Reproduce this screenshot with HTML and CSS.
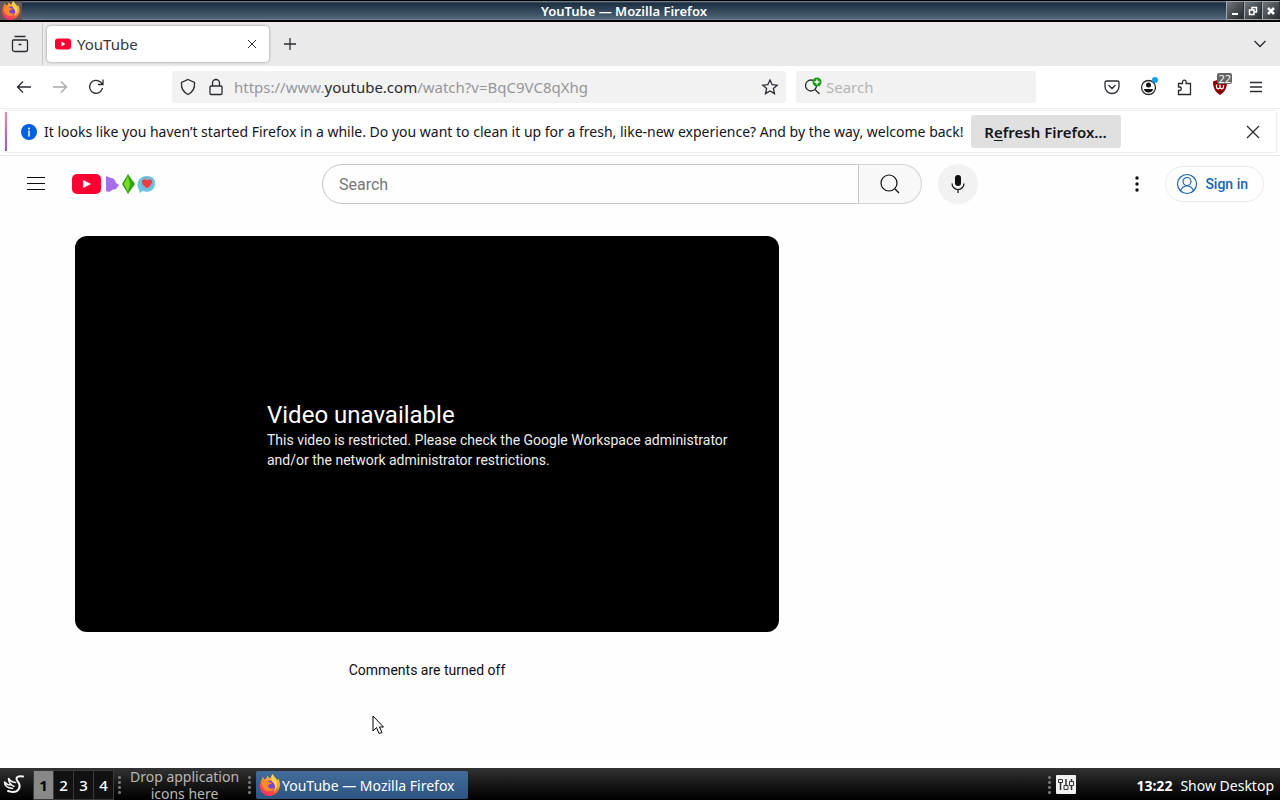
FILE: index.html
```html
<!DOCTYPE html>
<html lang="en">
<head>
<meta charset="utf-8">
<title>YouTube — Mozilla Firefox</title>
<link rel="stylesheet" href="styles.css">
</head>
<body>
<svg class="defs" aria-hidden="true">
  <defs>
    <linearGradient id="flame" x1="0.8" y1="0" x2="0.3" y2="1">
      <stop offset="0" stop-color="#ffe04a"/><stop offset="0.4" stop-color="#ff9a2e"/><stop offset="0.75" stop-color="#ff4b3e"/><stop offset="1" stop-color="#e82d7c"/>
    </linearGradient>
    <symbol id="firefox" viewBox="0 0 24 24">
      <path fill="url(#flame)" d="M3 6 4 3l2 3 2-1 1-3 3 3c1-1 1-3 3-5 1 3 4 4 5 7l1-2c2 4 3 9 0 13-2 4-6 6-10 6C5 24 1 19 1 13c0-3 1-5 2-7z"/>
      <circle cx="12" cy="13" r="6" fill="#7b45d6"/>
      <path fill="#ff8a2a" d="M3 9c3-3 6-1 8 0 2 0 3 0 3 1l-4 2c-1 4 4 5 7 3-2 5-9 5-12 1-1-2-2-4-2-7z"/>
      <path fill="#ffd23f" d="M15 1c1 3 5 5 5 11 0 3-2 6-4 7 3-5 1-8-1-10-2-3-1-6 0-8z"/>
    </symbol>
  </defs>
</svg>

<header class="titlebar">
  <svg class="titlebar-icon" viewBox="0 0 24 24"><use href="#firefox"/></svg>
  <span class="titlebar-text">YouTube — Mozilla Firefox</span>
  <div class="window-buttons">
    <button aria-label="Minimize"><svg viewBox="0 0 16 16"><path d="M5 11h6" stroke-width="2"/></svg></button>
    <button aria-label="Restore"><svg viewBox="0 0 16 16"><path d="M7 7V4.500h4.500V9H9.500M4.500 7h4.500v4.500H4.500z" stroke-width="1.500"/></svg></button>
    <button aria-label="Close window"><svg viewBox="0 0 16 16"><path d="m5 5 6 6m0-6-6 6" stroke-width="2.500"/></svg></button>
  </div>
</header>

<div class="tabstrip">
  <button class="icon-button view-button" aria-label="Firefox View"><svg class="icon" viewBox="0 0 20 20"><path d="M4.500 2.500h11M3.500 6h13a1 1 0 0 1 1 1v8.500a2 2 0 0 1-2 2h-11a2 2 0 0 1-2-2V7a1 1 0 0 1 1-1zM8.500 10.500h3"/></svg></button>
  <div class="tab">
    <svg class="favicon" viewBox="0 0 16 12"><rect width="16" height="11" y="0.500" rx="3" fill="#ff0033"/><path fill="#fff" d="M6.500 3.500v5l4-2.500z"/></svg>
    <span class="tab-label">YouTube</span>
    <button class="icon-button" aria-label="Close tab"><svg class="icon-small" viewBox="0 0 10 10"><path d="m1 1 8 8m0-8-8 8"/></svg></button>
  </div>
  <button class="icon-button new-tab" aria-label="New tab"><svg class="icon" viewBox="0 0 20 20"><path d="M10 4v12M4 10h12"/></svg></button>
  <button class="icon-button all-tabs" aria-label="List all tabs"><svg class="icon" viewBox="0 0 20 20"><path d="m4.500 7 5.500 5.500L15.500 7"/></svg></button>
</div>

<nav class="navbar">
  <div class="nav-buttons">
    <button class="icon-button" aria-label="Back"><svg class="icon" viewBox="0 0 20 20"><path d="M17 10H3.500M9 4.500 3.500 10 9 15.500"/></svg></button>
    <button class="icon-button" aria-label="Forward" disabled><svg class="icon" viewBox="0 0 20 20"><path d="M3 10h13.500M11 4.500l5.500 5.500-5.500 5.500"/></svg></button>
    <button class="icon-button" aria-label="Reload"><svg class="icon" viewBox="0 0 20 20"><path d="M16.500 11a6.500 6.500 0 1 1-2-6l2 2M17 2.500v5h-5"/></svg></button>
  </div>
  <div class="urlbar">
    <button class="icon-button" aria-label="Tracking protection"><svg class="icon" viewBox="0 0 20 20"><path d="m10 2.500 6.500 3c.5 5-1.500 9.500-6.500 12-5-2.500-7-7-6.500-12z"/></svg></button>
    <button class="icon-button" aria-label="Connection secure"><svg class="icon" viewBox="0 0 20 20"><path d="M5 9h10a1 1 0 0 1 1 1v6.500a1 1 0 0 1-1 1H5a1 1 0 0 1-1-1V10a1 1 0 0 1 1-1zM6.500 9V6a3.500 3.500 0 0 1 7 0v3"/></svg></button>
    <div class="url" role="textbox" aria-label="Address" contenteditable="true" spellcheck="false">https://www.<span class="url-domain">youtube.com</span>/watch?v=BqC9VC8qXhg</div>
    <button class="icon-button" aria-label="Bookmark"><svg class="icon" viewBox="0 0 20 20"><path d="m10 3 2.200 4.700 5 .5-3.800 3.400 1.100 5-4.500-2.600-4.500 2.600 1.100-5-3.800-3.400 5-.5z"/></svg></button>
  </div>
  <label class="searchbar">
    <svg class="icon" viewBox="0 0 20 20"><circle cx="9" cy="8.500" r="5.500"/><path d="m13 12.500 4.500 4.500"/><circle cx="15" cy="5" r="4.500" fill="#16a016" stroke="none"/><path d="M15 2.500v5M12.500 5h5" stroke="#fff"/></svg>
    <input type="text" placeholder="Search" aria-label="Search the web">
  </label>
  <div class="toolbar-actions">
    <button class="icon-button" aria-label="Save to Pocket"><svg class="icon" viewBox="0 0 20 20"><path d="M4.500 4h11a1.500 1.500 0 0 1 1.500 1.500V9.500a7 7 0 0 1-14 0v-4A1.500 1.500 0 0 1 4.500 4zM6.500 8l3.500 3.500L13.500 8"/></svg></button>
    <button class="icon-button" aria-label="Account"><svg class="icon" viewBox="0 0 20 20"><circle cx="10.500" cy="10.500" r="7"/><circle cx="10.500" cy="8" r="2.500" fill="#15141a" stroke="none"/><path fill="#15141a" stroke="none" d="M6 12h9c0 2-2 3.500-4.500 3.500S6 14 6 12z"/><circle cx="17" cy="3" r="3" fill="#1a9bf0" stroke="none"/></svg></button>
    <button class="icon-button" aria-label="Extensions"><svg class="icon" viewBox="0 0 20 20"><path d="M4.500 17.500v-4H6a1.800 1.800 0 0 0 0-3.500H4.500V6.500h4V5a1.800 1.800 0 0 1 3.600 0v1.500h4.400v11z"/></svg></button>
    <button class="icon-button shield" aria-label="uBlock Origin"><svg class="icon" viewBox="0 0 20 20"><path fill="#8f0000" stroke="none" d="m10 2 7 2.500c0 6-2 10.500-7 13.500-5-3-7-7.500-7-13.500z"/><path stroke="#fff" d="M6.500 7.500V10a1.700 1.700 0 0 0 3.500 0V7.500M10 10a1.700 1.700 0 0 0 3.500 0V8"/></svg><span class="badge">22</span></button>
    <button class="icon-button" aria-label="Application menu"><svg class="icon" viewBox="0 0 20 20"><path d="M4 5.500h12M4 10h12M4 14.500h12"/></svg></button>
  </div>
</nav>

<div class="notification-area">
  <div class="notification" role="alert">
    <svg class="info-icon" viewBox="0 0 16 16"><circle cx="8" cy="8" r="8" fill="#0060df"/><circle cx="8" cy="4.500" r="1" fill="#fff"/><path d="M8 7v5" stroke="#fff" stroke-width="1.500" stroke-linecap="round"/></svg>
    <span class="notification-text">It looks like you haven’t started Firefox in a while. Do you want to clean it up for a fresh, like-new experience? And by the way, welcome back!</span>
    <button class="refresh-button">R<u>e</u>fresh Firefox…</button>
    <button class="icon-button dismiss" aria-label="Dismiss"><svg class="icon" viewBox="0 0 20 20"><path d="m4 4 12 12m0-12L4 16"/></svg></button>
  </div>
</div>

<main class="page">
  <header class="masthead">
    <div class="masthead-start">
      <button class="icon-button" aria-label="Guide"><svg class="icon-large" viewBox="0 0 24 24"><path d="M3 5.500h18M3 11.500h18M3 17.500h18"/></svg></button>
      <a class="logo" href="#" aria-label="YouTube Home"><svg viewBox="0 0 84 20">
        <rect width="29" height="20" rx="5" fill="#ff0033"/><path fill="#fff" d="M11 6v8l8-4z"/>
        <path fill="#a66cf0" d="M34 2l5 2c3 0 4 2 5 5l3 2-3 4-4 1-3 2-3-1z"/>
        <path fill="#35a318" d="m56 0 7 10-7 10-6-10z"/><path fill="#72dd20" d="m56 2 2 8-2 8-4-8z"/>
        <path fill="#64c7e8" d="M67 19c1-2 0-3-1-5-2-6 2-12 9-12 6 0 9 4 8 9-1 6-7 8-12 6z"/><circle cx="75" cy="9" r="6" fill="#91aabe"/><path fill="#ed3b45" d="M75 14c-3-2-5-4-5-6 0-3 4-3 5-1 1-2 5-2 5 1 0 2-2 4-5 6z"/>
      </svg></a>
    </div>
    <form class="search">
      <input class="search-input" type="text" placeholder="Search" aria-label="Search YouTube">
      <button class="search-submit" type="button" aria-label="Search"><svg class="icon-large" viewBox="0 0 24 24"><circle cx="11" cy="11" r="8"/><path d="m17 17 4 4"/></svg></button>
      <button class="mic" type="button" aria-label="Search with your voice"><svg class="icon-large" viewBox="0 0 24 24"><rect x="9" y="3" width="6" height="11" rx="3" fill="#0f0f0f" stroke="none"/><path d="M6 11.500a6 6 0 0 0 12 0M12 17.500V21"/></svg></button>
    </form>
    <div class="masthead-end">
      <button class="icon-button" aria-label="Settings"><svg class="icon-large" viewBox="0 0 24 24"><g fill="#0f0f0f" stroke="none"><circle cx="12" cy="6" r="1.700"/><circle cx="12" cy="12" r="1.700"/><circle cx="12" cy="18" r="1.700"/></g></svg></button>
      <a class="sign-in" href="#"><svg class="icon-large" viewBox="0 0 24 24"><circle cx="12" cy="12" r="9.500"/><circle cx="12" cy="9.500" r="4"/><path d="M5.500 19c1-3 3.500-5 6.500-5s5.500 2 6.500 5"/></svg>Sign in</a>
    </div>
  </header>
  <div class="columns">
    <div class="primary">
      <section class="player">
        <div class="player-error">
          <h1>Video unavailable</h1>
          <p>This video is restricted. Please check the Google Workspace administrator and/or the network administrator restrictions.</p>
        </div>
      </section>
      <p class="comments">Comments are turned off</p>
    </div>
    <aside class="secondary"></aside>
  </div>
</main>

<footer class="panel">
  <button class="start" aria-label="Applications"><svg viewBox="0 0 22 22"><g fill="none" stroke="#f4f4f4" stroke-linecap="round" stroke-linejoin="round"><path stroke-width="2" d="M20 2.500c-3-.5-6-.5-6.500 2-.3 2 1.500 3 2.500 5 2 4-1 8.500-6 8.500-2 0-3-.5-5-1"/><path stroke-width="1.500" d="M12.500 8.500C9 8 7 7 5.500 4.500 5.500 9 8 11 11 12.500M8 11C5 11 3 10 1.500 8c0 4 3.500 6 8 6.500"/></g></svg></button>
  <div class="workspaces">
    <button class="current">1</button><button>2</button><button>3</button><button>4</button>
  </div>
  <span class="grip"></span>
  <span class="launcher-hint">Drop application icons here</span>
  <span class="grip"></span>
  <button class="task"><svg viewBox="0 0 24 24"><use href="#firefox"/></svg>YouTube — Mozilla Firefox</button>
  <div class="tray">
    <span class="grip"></span>
    <svg class="mixer" viewBox="0 0 20 20"><rect width="20" height="19" rx="1" fill="#f2f2f2"/><path d="M4.500 4v11M10 4v11M15.500 4v11" stroke="#333" stroke-width="1.500"/><path fill="#f2f2f2" stroke="#333" d="M2.500 4.500h4v3h-4zM8 10.500h4v4H8zM13.500 6.500h4v4h-4z"/></svg>
    <time class="clock">13:22</time>
    <button class="show-desktop">Show Desktop</button>
  </div>
</footer>

<svg class="cursor" viewBox="0 0 12 20" aria-hidden="true"><path fill="#fff" stroke="#000" d="M1 1v15l3.500-3.500L7 18.500l3-1-2.500-5.500H11.500z"/></svg>
</body>
</html>
```
FILE: styles.css
```css
* {
  box-sizing: border-box;
}

body {
  margin: 0;
  min-height: 100vh;
  display: flex;
  flex-direction: column;
  overflow: hidden;
  background: #fff;
  color: #15141a;
  font-family: "Noto Sans", sans-serif;
  font-size: 15px;
}

button,
input {
  margin: 0;
  padding: 0;
  border: 0;
  background: none;
  color: inherit;
  font: inherit;
}

input::placeholder {
  color: #b4b4b4;
  opacity: 1;
}

svg {
  display: block;
  flex: none;
}

.defs {
  position: absolute;
  width: 0;
  height: 0;
}

.icon,
.icon-small,
.icon-large {
  fill: none;
  stroke: #2b2a33;
  stroke-width: 1.3;
}

.icon {
  width: 20px;
  height: 20px;
}

.icon-small {
  width: 10px;
  height: 10px;
  stroke-width: 1;
}

.icon-large {
  width: 24px;
  height: 24px;
  stroke: #0f0f0f;
  stroke-width: 1.2;
}

.icon-button {
  display: flex;
  align-items: center;
  justify-content: center;
  flex: none;
}

.icon-button:disabled {
  opacity: 0.4;
}

/* Window frame */
.titlebar {
  display: flex;
  align-items: center;
  justify-content: space-between;
  height: 22px;
  border: solid #000;
  border-width: 1px 0 2px;
  background: linear-gradient(#8494a2 0, #1c2e40 2px, #34495c 10px, #516679 18px, #8b9ba8 19px);
  color: #fff;
}

.titlebar-icon {
  width: 22px;
  height: 19px;
  background: #62585c;
}

.titlebar-text {
  font-size: 13px;
  font-weight: 600;
  line-height: 18px;
}

.window-buttons {
  display: flex;
}

.window-buttons button {
  width: 18px;
  height: 19px;
  border: 1px solid #a2a7ad;
  border-right-color: #30353b;
  background: linear-gradient(135deg, #70767d, #24282e);
}

.window-buttons svg {
  width: 16px;
  height: 16px;
  fill: none;
  stroke: #fff;
}

/* Tabs */
.tabstrip {
  display: flex;
  align-items: center;
  height: 44px;
  background: #eaeaea;
}

.view-button {
  width: 43px;
  height: 42px;
  padding-right: 3px;
  border-right: 1px solid #c8c8c8;
}

.tab {
  display: flex;
  align-items: center;
  gap: 6px;
  width: 222px;
  height: 36px;
  margin-left: 4px;
  padding: 0 12px 0 8px;
  border-radius: 4px;
  background: #fff;
  box-shadow: 0 0 3px #0006;
}

.favicon {
  width: 16px;
  height: 12px;
}

.tab-label {
  flex: 1;
  color: #38373d;
}

.new-tab {
  margin-left: 11px;
}

.all-tabs {
  margin: 0 10px 0 auto;
}

/* Navigation toolbar */
.navbar {
  display: flex;
  align-items: center;
  height: 42px;
  padding: 0 14px;
}

.nav-buttons {
  display: flex;
  gap: 16px;
  width: 158px;
}

.urlbar,
.searchbar {
  display: flex;
  align-items: center;
  gap: 8px;
  height: 32px;
  padding: 0 6px;
  border-radius: 3px;
  background: #f2f2f2;
}

.urlbar {
  flex: 1;
  min-width: 0;
}

.url {
  flex: 1;
  min-width: 0;
  overflow: hidden;
  white-space: nowrap;
  color: #96969a;
}

.url-domain {
  color: #2b2a33;
}

.searchbar {
  gap: 4px;
  width: 240px;
  margin-left: 10px;
}

.searchbar input {
  flex: 1;
  min-width: 0;
}

.toolbar-actions {
  display: flex;
  gap: 16px;
  margin-left: 66px;
}

.shield {
  position: relative;
}

.badge {
  position: absolute;
  top: -4px;
  right: -2px;
  padding: 0 1px;
  border-radius: 2px;
  background: #666;
  color: #fff;
  font-size: 11px;
  line-height: 11px;
}

/* Notification */
.notification-area {
  padding: 2px 4px 3px 5px;
  border-top: 1px solid #f0f0f0;
  border-bottom: 1px solid #e6e6e8;
}

.notification {
  display: flex;
  align-items: center;
  height: 41px;
  padding: 0 12px 0 14px;
  border: 1px solid #f0f0f0;
  border-left: 2px solid;
  border-image: linear-gradient(#e88aa8, #9059c8) 0 0 0 2;
  box-shadow: 0 0 2px #0003;
}

.info-icon {
  width: 16px;
  height: 16px;
}

.notification-text {
  margin-left: 7px;
  font-size: 14px;
  white-space: nowrap;
}

.refresh-button {
  height: 33px;
  width: 150px;
  margin-left: 7px;
  border-radius: 3px;
  background: #e0e0e1;
  font-weight: 600;
  white-space: nowrap;
}

.refresh-button u {
  text-underline-offset: 2px;
}

.dismiss {
  margin-left: auto;
}

/* Web page */
.page {
  flex: 1;
  color: #0f0f0f;
  font-family: Roboto, sans-serif;
  font-size: 14px;
  background: #fefefe;
}

.masthead {
  display: flex;
  align-items: center;
  justify-content: space-between;
  height: 56px;
  padding: 0 16px 0 24px;
}

.masthead-start,
.masthead-end {
  display: flex;
  align-items: center;
}

.masthead-start {
  gap: 24px;
  width: 225px;
}

.masthead-end {
  justify-content: flex-end;
  gap: 16px;
  width: 225px;
}

.logo svg {
  width: 84px;
  height: 20px;
}

.search {
  display: flex;
  flex: 1;
  max-width: 656px;
  margin: 0 61px 0 73px;
}

.search-input {
  flex: 1;
  min-width: 0;
  height: 40px;
  padding: 0 16px;
  border: 1px solid #c6c6c6;
  border-radius: 20px 0 0 20px;
  font-size: 16px;
}

.search-input::placeholder {
  color: #777;
}

.search-submit {
  display: flex;
  align-items: center;
  justify-content: center;
  width: 63px;
  border: 1px solid #d3d3d3;
  border-left: 0;
  border-radius: 0 20px 20px 0;
  background: #f8f8f8;
}

.mic {
  display: flex;
  align-items: center;
  justify-content: center;
  width: 40px;
  height: 40px;
  margin-left: 16px;
  border-radius: 50%;
  background: #f2f2f2;
}

.sign-in {
  display: flex;
  align-items: center;
  gap: 6px;
  height: 36px;
  padding: 0 15px 0 9px;
  border: 1px solid #e9e9e9;
  border-radius: 18px;
  color: #1765b5;
  font-weight: 500;
  text-decoration: none;
}

.sign-in svg {
  stroke: #1765b5;
}

.columns {
  display: flex;
  padding: 24px 75px 0;
}

.primary {
  flex: 1;
  min-width: 0;
}

.secondary {
  width: 402px;
  margin-left: 24px;
}

.player {
  display: flex;
  align-items: center;
  aspect-ratio: 16 / 9;
  padding: 2px 32px 0 192px;
  border-radius: 12px;
  background: #000;
  color: #fff;
}

.player-error h1 {
  margin: 0;
  font-size: 24px;
  font-weight: 400;
  line-height: 30px;
}

.player-error p {
  margin: 0;
  line-height: 20px;
  color: #eee;
}

.comments {
  margin: 28px 0 0;
  line-height: 20px;
  text-align: center;
}

/* Desktop panel */
.panel {
  display: flex;
  align-items: center;
  height: 32px;
  padding: 2px 6px 0 0;
  background: linear-gradient(#333, #171717 50%, #000);
  color: #fff;
}

.start {
  width: 34px;
  padding-left: 3px;
}

.start svg {
  width: 22px;
  height: 22px;
}

.workspaces {
  display: flex;
  gap: 1px;
}

.workspaces button {
  width: 19px;
  height: 28px;
  background: #111;
  box-shadow: 0 0 0 1px #3a3a3a;
  font-weight: 500;
}

.workspaces .current {
  background: #888;
  color: #000;
  font-weight: 700;
}

.grip {
  flex: none;
  width: 3px;
  height: 20px;
  margin: 0 5px;
  background: radial-gradient(circle, #777 1px, #0000 2px) 0 0 / 3px 5px;
}

.launcher-hint {
  width: 117px;
  color: #b8b8b8;
  font-size: 14px;
  line-height: 17px;
  text-align: center;
}

.task {
  display: flex;
  align-items: center;
  gap: 1px;
  height: 28px;
  min-width: 212px;
  padding: 0 5px 0 3px;
  border-radius: 2px;
  background: linear-gradient(#426c99, #2d5583);
  font-size: 14px;
  white-space: nowrap;
}

.task svg {
  width: 22px;
  height: 22px;
}

.tray {
  display: flex;
  align-items: center;
  margin-left: auto;
}

.mixer {
  width: 20px;
  height: 20px;
}

.clock {
  margin-left: 60px;
  font-size: 14px;
  font-weight: 700;
}

.show-desktop {
  margin-left: 8px;
  font-size: 14px;
}

.cursor {
  position: absolute;
  left: 372px;
  top: 715px;
  width: 12px;
  height: 20px;
}
```
